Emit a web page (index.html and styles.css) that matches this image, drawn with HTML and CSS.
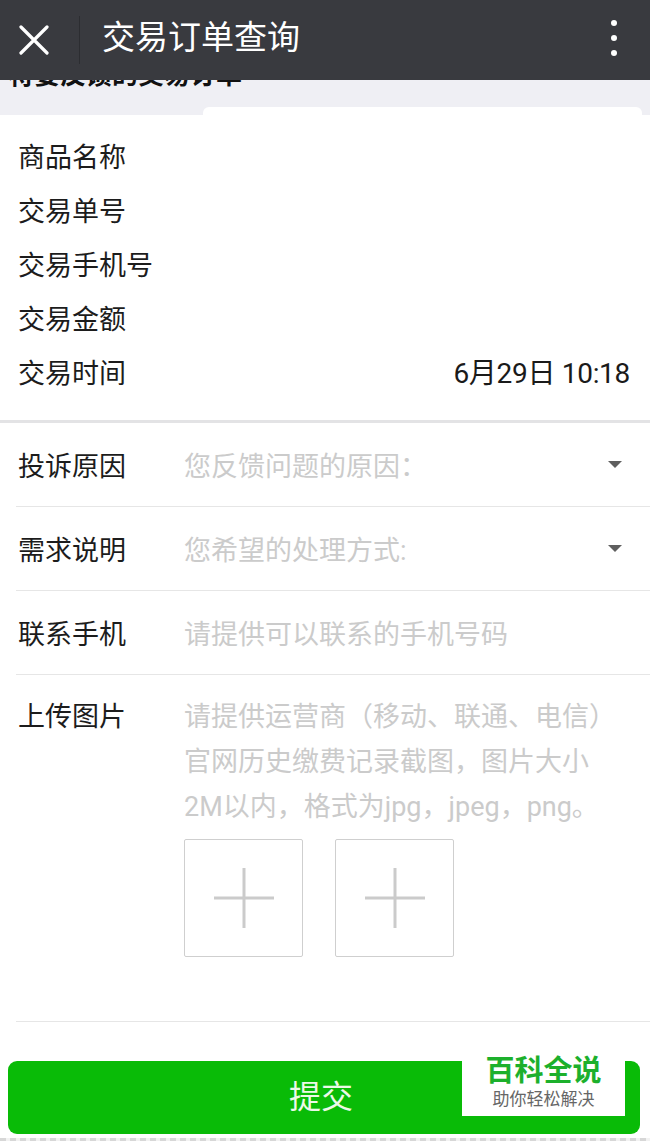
FILE: index.html
```html
<!DOCTYPE html>
<html lang="zh-CN">
<head>
    <meta charset="UTF-8">
    <meta name="viewport" content="width=device-width, initial-scale=1.0">
    <title>交易订单查询</title>
    <link rel="stylesheet" href="styles.css">
</head>
<body>
    <div class="topbar">
        <div class="close">
            <svg width="30" height="30" viewBox="0 0 30 30">
                <path d="M2 2 L28 28 M28 2 L2 28" stroke="#fff" stroke-width="3.2" stroke-linecap="round"/>
            </svg>
        </div>
        <div class="topbar-title">交易订单查询</div>
        <div class="more">
            <span></span><span></span><span></span>
        </div>
    </div>

    <div class="intro">
        <h2>将要反馈的交易订单</h2>
        <div class="tab-row">
            <div class="tab"></div>
        </div>
    </div>

    <div class="info">
        <div class="info-row"><span>商品名称</span><span></span></div>
        <div class="info-row"><span>交易单号</span><span></span></div>
        <div class="info-row"><span>交易手机号</span><span></span></div>
        <div class="info-row"><span>交易金额</span><span></span></div>
        <div class="info-row"><span>交易时间</span><span class="value">6月29日 10:18</span></div>
    </div>

    <div class="form">
        <div class="form-row">
            <div class="label">投诉原因</div>
            <div class="field">您反馈问题的原因：</div>
            <div class="arrow"></div>
        </div>
        <div class="form-row">
            <div class="label">需求说明</div>
            <div class="field">您希望的处理方式:</div>
            <div class="arrow"></div>
        </div>
        <div class="form-row">
            <div class="label">联系手机</div>
            <div class="field">请提供可以联系的手机号码</div>
        </div>
        <div class="form-row upload-row">
            <div class="label">上传图片</div>
            <div class="upload">
                <div class="upload-tip">请提供运营商（移动、联通、电信）<br>官网历史缴费记录截图，图片大小<br>2M以内，格式为jpg，jpeg，png。</div>
                <div class="upload-boxes">
                    <div class="upload-box"></div>
                    <div class="upload-box"></div>
                </div>
            </div>
        </div>
    </div>

    <div class="submit-wrap">
        <button class="submit">提交</button>
    </div>
    <div class="bottom-edge"></div>

    <div class="watermark">
        <div class="wm-title">百科全说</div>
        <div class="wm-sub">助你轻松解决</div>
    </div>
</body>
</html>
```

FILE: styles.css
```css
body {
    font-family: Roboto, "Noto Sans CJK SC", sans-serif;
    margin: 0;
    background: #fff;
    color: #1c1c1c;
    position: relative;
    width: 650px;
    overflow: hidden;
}
.topbar {
    position: absolute;
    top: 0;
    left: 0;
    right: 0;
    height: 80px;
    background: #393a3f;
    display: flex;
    align-items: center;
    z-index: 2;
}
.close {
    width: 80px;
    height: 48px;
    display: flex;
    align-items: center;
    padding-left: 19px;
    box-sizing: border-box;
    border-right: 1px solid #2c2d31;
}
.close svg {
    display: block;
}
.topbar-title {
    flex: 1;
    color: #fff;
    font-size: 33px;
    padding-left: 22px;
    line-height: 1;
    margin-top: -6px;
}
.more {
    width: 72px;
    display: flex;
    flex-direction: column;
    align-items: center;
    gap: 9px;
    margin-top: -4px;
}
.more span {
    width: 6px;
    height: 6px;
    border-radius: 50%;
    background: #fff;
}
.intro {
    background: #efeff4;
    padding-top: 62px;
}
.intro h2 {
    margin: 0;
    padding-left: 8px;
    font-size: 26px;
    line-height: 26px;
    font-weight: 700;
    color: #111;
}
.tab-row {
    height: 27px;
    display: flex;
    align-items: flex-end;
    padding-left: 203px;
    padding-right: 8px;
}
.tab {
    flex: 1;
    height: 8px;
    background: #fff;
    border-radius: 6px 6px 0 0;
}
.info {
    padding: 13px 0 22px;
    border-bottom: 3px solid #e3e3e5;
}
.info-row {
    height: 54px;
    display: flex;
    align-items: center;
    justify-content: space-between;
    padding: 0 20px 0 18px;
    font-size: 27px;
}
.value {
    font-size: 28px;
    color: #1a1a1a;
    letter-spacing: -0.3px;
}
.form-row {
    margin-left: 16px;
    height: 83px;
    border-bottom: 1px solid #e6e6e6;
    display: flex;
    align-items: center;
    font-size: 27px;
}
.label {
    width: 166px;
    padding-left: 2px;
    color: #1c1c1c;
}
.field {
    flex: 1;
    color: #cbcbcb;
}
.arrow {
    width: 0;
    height: 0;
    border-left: 7px solid transparent;
    border-right: 7px solid transparent;
    border-top: 7px solid #5f5f5f;
    margin-right: 28px;
}
.upload-row {
    height: auto;
    align-items: flex-start;
    padding: 20px 0 64px;
}
.upload-row .label {
    line-height: 45px;
}
.upload {
    flex: 1;
}
.upload-tip {
    color: #cbcbcb;
    line-height: 45px;
    white-space: nowrap;
}
.upload-boxes {
    display: flex;
    gap: 32px;
    margin-top: 9px;
}
.upload-box {
    width: 117px;
    height: 116px;
    border: 1px solid #cfcfcf;
    border-radius: 2px;
    position: relative;
}
.upload-box::before,
.upload-box::after {
    content: "";
    position: absolute;
    background: #cbcbcb;
    left: 50%;
    top: 50%;
}
.upload-box::before {
    width: 60px;
    height: 3px;
    transform: translate(-50%, -50%);
}
.upload-box::after {
    width: 3px;
    height: 60px;
    transform: translate(-50%, -50%);
}
.submit-wrap {
    padding: 39px 10px 4px 8px;
}
.submit {
    display: block;
    width: 100%;
    height: 73px;
    border: none;
    border-radius: 9px;
    background: #09bb07;
    color: #ecf9e8;
    font-family: inherit;
    font-size: 32px;
    padding: 0 6px 8px 0;
}
.bottom-edge {
    height: 4px;
    background: repeating-linear-gradient(90deg, #d7d7d7 0 6px, #f2f2f2 6px 10px);
}
.watermark {
    position: absolute;
    left: 462px;
    top: 1050px;
    width: 163px;
    height: 66px;
    background: #fff;
    text-align: center;
    z-index: 1;
}
.wm-title {
    font-size: 29px;
    font-weight: 700;
    color: #1cb02c;
    line-height: 34px;
    margin-top: 4px;
}
.wm-sub {
    font-size: 17px;
    color: #666;
    line-height: 22px;
}
```
